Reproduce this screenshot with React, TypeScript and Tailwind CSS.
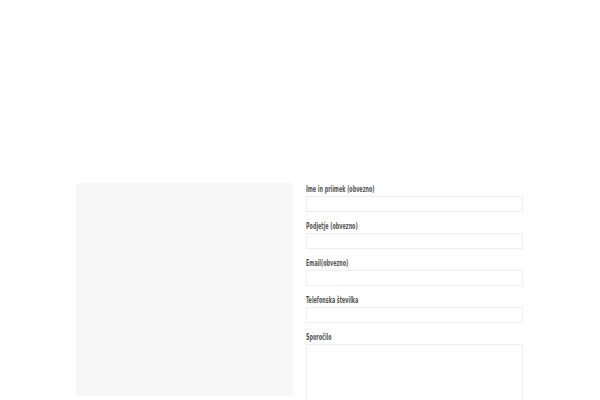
const fields = [
  "Ime in priimek (obvezno)",
  "Podjetje (obvezno)",
  "Email(obvezno)",
  "Telefonska številka",
];

function Label({ text }: { text: string }) {
  return (
    <label className="block h-[13px] text-[9px] leading-[12px] font-bold text-[#555] whitespace-nowrap">
      {/* condensed face is not installed, so squeeze the condensed fallback */}
      <span className="inline-block origin-left scale-x-[0.6]">{text}</span>
    </label>
  );
}

export default function App() {
  return (
    <div className="w-[600px] h-[400px] overflow-hidden bg-white">
      <div
        className="flex gap-[13px] pl-[76px] pt-[183px]"
        style={{ fontFamily: '"DejaVu Sans Condensed", "Liberation Sans", sans-serif' }}
      >
        {/* Image placeholder */}
        <div className="w-[217px] h-[213px] bg-[#f7f7f7] shrink-0" />

        {/* Contact form */}
        <form className="w-[217px] flex flex-col">
          {fields.map((label) => (
            <div key={label} className="mb-[8px]">
              <Label text={label} />
              <input
                type="text"
                className="block w-full h-[16px] border border-[#efefef] bg-white outline-none"
              />
            </div>
          ))}
          <div>
            <Label text="Sporočilo" />
            <textarea className="block w-full h-[120px] border border-[#efefef] bg-white outline-none resize-none" />
          </div>
        </form>
      </div>
    </div>
  );
}
